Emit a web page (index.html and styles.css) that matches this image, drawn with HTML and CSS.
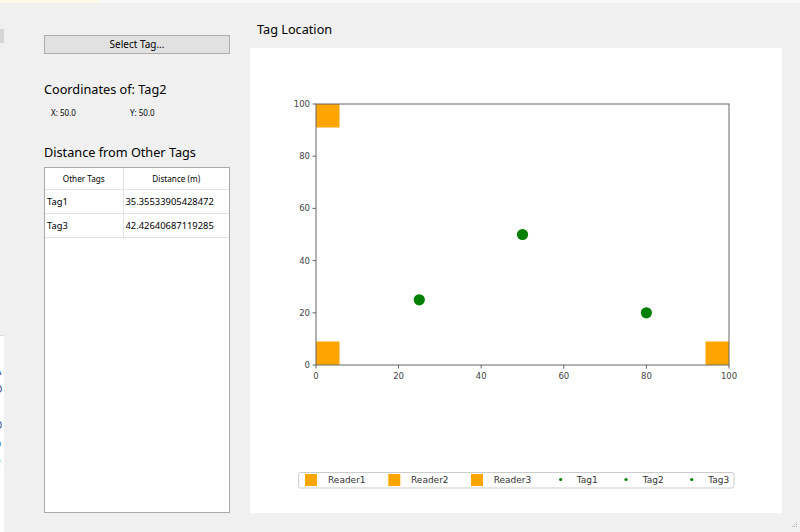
FILE: index.html
```html
<!DOCTYPE html>
<html>
<head>
<meta charset="utf-8">
<link rel="stylesheet" href="styles.css">
</head>
<body>
<div class="desktop">
  <div class="topband"><div class="yellow"></div></div>
  <div class="leftstrip">
    <div class="strip-gray"></div>
    <div class="strip-white">
      <span>A</span><span>D</span><span>I</span><span>D</span><span>b</span><span>e</span>
    </div>
  </div>
</div>

<div class="window">
  <div class="left-col">
    <button class="select-btn">Select Tag...</button>
    <h2 class="heading coords-heading">Coordinates of: Tag2</h2>
    <div class="coords">
      <span class="coord">X: 50.0</span>
      <span class="coord">Y: 50.0</span>
    </div>
    <h2 class="heading dist-heading">Distance from Other Tags</h2>
    <div class="table-frame">
      <table class="dist-table">
        <thead>
          <tr><th class="c1">Other Tags</th><th class="c2">Distance (m)</th></tr>
        </thead>
        <tbody>
          <tr><td class="c1">Tag1</td><td class="c2">35.35533905428472</td></tr>
          <tr><td class="c1">Tag3</td><td class="c2">42.42640687119285</td></tr>
        </tbody>
      </table>
    </div>
  </div>

  <div class="right-col">
    <h2 class="plot-title">Tag Location</h2>
    <div class="plot-box">
      <svg class="plot" viewBox="0 0 532 465" width="532" height="465">
        <defs>
          <clipPath id="axclip"><rect x="66" y="56" width="413" height="261"/></clipPath>
        </defs>
        <g clip-path="url(#axclip)">
          <rect x="42.5" y="32.5" width="47" height="47" fill="#ffa500"/>
          <rect x="42.5" y="293.5" width="47" height="47" fill="#ffa500"/>
          <rect x="455.5" y="293.5" width="47" height="47" fill="#ffa500"/>
        </g>
        <circle cx="169.3" cy="251.8" r="5.6" fill="#008000"/>
        <circle cx="272.5" cy="186.5" r="5.6" fill="#008000"/>
        <circle cx="396.4" cy="264.8" r="5.6" fill="#008000"/>
        <rect x="66" y="56" width="413" height="261" fill="none" stroke="#666" stroke-width="1"/>
        <g stroke="#666" stroke-width="1">
          <line x1="62.5" y1="317" x2="66" y2="317"/>
          <line x1="62.5" y1="264.8" x2="66" y2="264.8"/>
          <line x1="62.5" y1="212.6" x2="66" y2="212.6"/>
          <line x1="62.5" y1="160.4" x2="66" y2="160.4"/>
          <line x1="62.5" y1="108.2" x2="66" y2="108.2"/>
          <line x1="62.5" y1="56" x2="66" y2="56"/>
          <line x1="66" y1="317" x2="66" y2="320.5"/>
          <line x1="148.6" y1="317" x2="148.6" y2="320.5"/>
          <line x1="231.2" y1="317" x2="231.2" y2="320.5"/>
          <line x1="313.8" y1="317" x2="313.8" y2="320.5"/>
          <line x1="396.4" y1="317" x2="396.4" y2="320.5"/>
          <line x1="479" y1="317" x2="479" y2="320.5"/>
        </g>
        <g class="tick" text-anchor="end">
          <text x="60" y="320">0</text>
          <text x="60" y="267.8">20</text>
          <text x="60" y="215.6">40</text>
          <text x="60" y="163.4">60</text>
          <text x="60" y="111.2">80</text>
          <text x="60" y="59">100</text>
        </g>
        <g class="tick" text-anchor="middle">
          <text x="66" y="330.5">0</text>
          <text x="148.6" y="330.5">20</text>
          <text x="231.2" y="330.5">40</text>
          <text x="313.8" y="330.5">60</text>
          <text x="396.4" y="330.5">80</text>
          <text x="479" y="330.5">100</text>
        </g>
        <rect x="48.5" y="424.5" width="435.5" height="15.5" rx="2" fill="#fff" stroke="#cccccc"/>
        <rect x="55" y="426" width="12" height="12" fill="#ffa500"/>
        <rect x="138.3" y="426" width="12" height="12" fill="#ffa500"/>
        <rect x="221" y="426" width="12" height="12" fill="#ffa500"/>
        <circle cx="310.7" cy="431.5" r="1.6" fill="#008000"/>
        <circle cx="376" cy="431.5" r="1.6" fill="#008000"/>
        <circle cx="441.7" cy="431.5" r="1.6" fill="#008000"/>
        <g class="legend-text">
          <text x="78" y="434.5">Reader1</text>
          <text x="161" y="434.5">Reader2</text>
          <text x="243.7" y="434.5">Reader3</text>
          <text x="326.7" y="434.5">Tag1</text>
          <text x="392.7" y="434.5">Tag2</text>
          <text x="458.3" y="434.5">Tag3</text>
        </g>
      </svg>
    </div>
  </div>

  <svg class="grip" viewBox="0 0 10 10" width="10" height="10">
    <g fill="#b8b8b8">
      <rect x="8" y="2" width="1" height="1"/>
      <rect x="6" y="4" width="1" height="1"/>
      <rect x="8" y="4" width="1" height="1"/>
      <rect x="4" y="6" width="1" height="1"/>
      <rect x="6" y="6" width="1" height="1"/>
      <rect x="8" y="6" width="1" height="1"/>
    </g>
  </svg>
</div>
</body>
</html>
```
FILE: styles.css
```css
* { box-sizing: border-box; }
html, body {
  margin: 0;
  padding: 0;
  width: 800px;
  height: 532px;
  overflow: hidden;
  background: #f7f7f7;
  font-family: "Noto Sans", "Open Sans", sans-serif;
}
.desktop {
  position: absolute;
  left: 0;
  top: 0;
  width: 800px;
  height: 532px;
}
.topband {
  height: 3px;
  background: #f8f8f8;
}
.yellow {
  width: 100px;
  height: 3px;
  background: #fdfbe8;
}
.leftstrip {
  position: absolute;
  left: 0;
  top: 3px;
  width: 4px;
  height: 529px;
  background: #f0f0f0;
  overflow: hidden;
}
.strip-gray {
  margin-top: 26px;
  height: 14px;
  background: #d6d6d6;
}
.strip-white {
  margin-top: 292px;
  height: 200px;
  background: #fff;
  border-top: 1px solid #dcdcdc;
  padding-top: 26px;
  display: flex;
  flex-direction: column;
}
.strip-white span {
  display: block;
  height: 18px;
  line-height: 18px;
  margin-left: -5px;
  font-size: 10px;
  color: #2a4a8c;
}
.window {
  position: absolute;
  left: 4px;
  top: 3px;
  width: 796px;
  height: 529px;
  background: #f0f0f0;
  display: flex;
  padding: 0 18px 19px 40px;
}
.left-col {
  width: 186px;
  display: flex;
  flex-direction: column;
  padding-top: 32px;
  margin-right: 20px;
}
.select-btn {
  height: 19px;
  width: 186px;
  margin: 0;
  padding: 0;
  background: #e1e1e1;
  border: 1px solid #adadad;
  font-family: "Noto Sans", "Open Sans", sans-serif;
  font-size: 10px;
  color: #000;
  line-height: 17px;
}
.heading {
  margin: 0;
  font-weight: normal;
  font-size: 12.7px;
  line-height: 20px;
  height: 20px;
  color: #000;
  white-space: nowrap;
}
.coords-heading { margin-top: 25px; }
.coords {
  margin-top: 8px;
  height: 12px;
  display: flex;
  padding-left: 7px;
}
.coord {
  font-size: 8px;
  line-height: 12px;
  color: #000;
}
.coord:first-child { width: 79px; }
.dist-heading { margin-top: 23px; }
.table-frame {
  margin-top: 5px;
  flex: 1;
  background: #fff;
  border: 1px solid #a9a9a9;
}
.dist-table {
  border-collapse: collapse;
  width: 184px;
  table-layout: fixed;
}
.dist-table th {
  height: 21px;
  padding: 0;
  font-weight: normal;
  font-size: 8.2px;
  color: #000;
  text-align: center;
  border-bottom: 1px solid #e6e6e6;
}
.dist-table th.c1 { border-right: 1px solid #e0e0e0; }
.dist-table .c1 { width: 78px; }
.dist-table td {
  height: 24px;
  padding: 0 0 0 2px;
  font-size: 9.4px;
  color: #000;
  border-bottom: 1px solid #e3e3e3;
}
.dist-table td.c1 { border-right: 1px solid #e3e3e3; }
.right-col {
  flex: 1;
  display: flex;
  flex-direction: column;
}
.plot-title {
  margin: 0;
  padding: 16px 0 0 7px;
  height: 36px;
  margin-bottom: 9px;
  font-weight: normal;
  font-size: 12.7px;
  line-height: 20px;
  color: #000;
}
.plot-box {
  flex: 1;
  background: #fff;
  overflow: hidden;
}
.plot {
  display: block;
}
.tick {
  font-family: "DejaVu Sans", sans-serif;
  font-size: 8.5px;
  fill: #444;
}
.legend-text {
  font-family: "DejaVu Sans", sans-serif;
  font-size: 9px;
  fill: #333;
}
.grip {
  position: absolute;
  right: 2px;
  bottom: 2px;
}
```
